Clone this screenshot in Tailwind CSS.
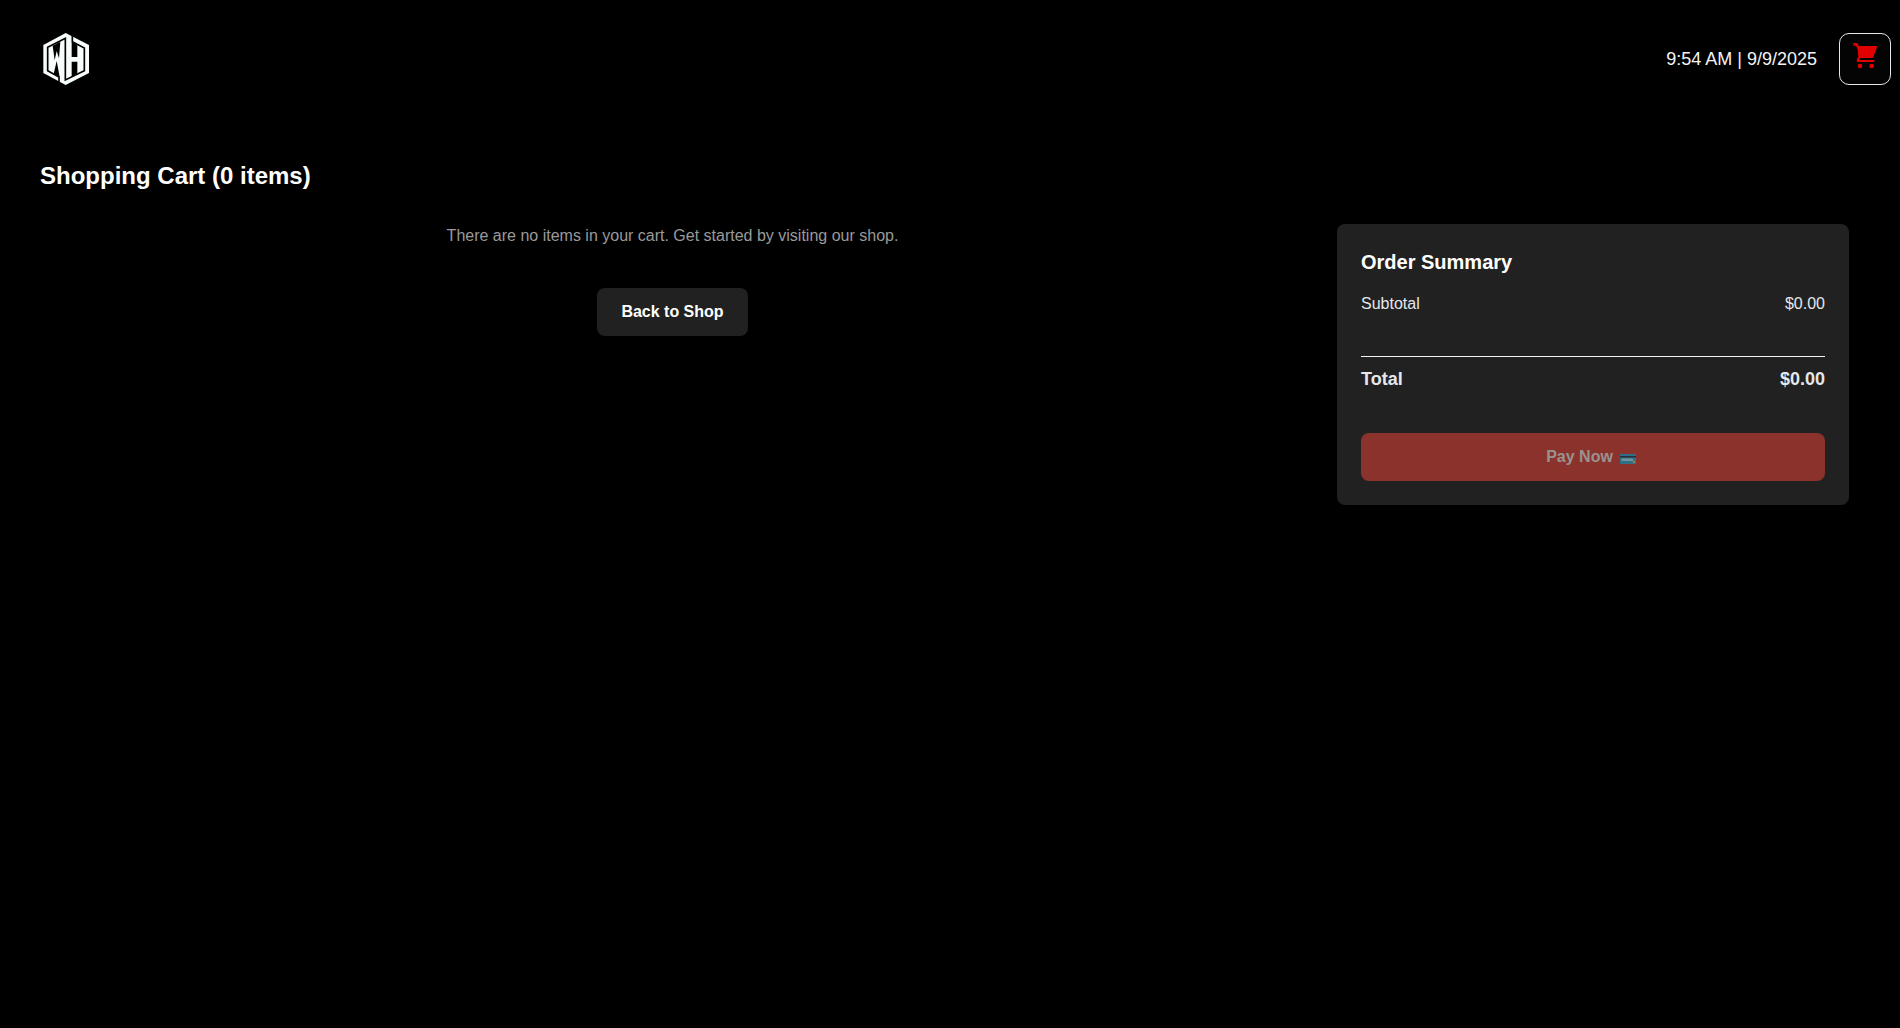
<!DOCTYPE html>
<html lang="en">
<head>
    <meta charset="UTF-8">
    <meta name="viewport" content="width=device-width, initial-scale=1.0">
    <title>Shopping Cart</title>
    <script src="https://cdn.jsdelivr.net/npm/@tailwindcss/browser@4"></script>
</head>
<body class="min-h-screen bg-black text-white font-['Liberation_Sans',Arial,sans-serif]">
    <header class="flex items-center justify-between h-[118px] pl-10 pr-[9px]">
        <a href="#" aria-label="Home">
            <svg class="w-[52px] h-[52px]" viewBox="0 0 156 156">
                <path d="M77 0L147 36V120L77 156L10 120V36Z" fill="#f7fdfb"/>
                <!-- Channels that separate the W and H from the frame -->
                <path d="M57 150V132L23 113V43L76 16V141L133 113V45L97 26V6" fill="none" stroke="#000" stroke-width="5"/>
                <!-- W -->
                <path d="M38 38L61 26L57 76L50 54L44 82Z"/>
                <path d="M50 84L59 132L41 123Z"/>
                <!-- H -->
                <path d="M95 26L112 36V72H95Z"/>
                <path d="M95 86H112V122L95 131Z"/>
            </svg>
        </a>
        <div class="flex items-center gap-[22px]">
            <span class="text-lg font-medium text-gray-100">9:54 AM | 9/9/2025</span>
            <button class="flex justify-center w-[52px] h-[52px] pt-2 rounded-[10px] border border-gray-200 bg-[#040404]" aria-label="Cart">
                <svg class="w-7 h-7" viewBox="0 0 84 84" fill="#e00000">
                    <path d="M7 3H17Q20 3 21 6L23 12H76Q80 12 78 16L67 45Q66 48 62 48H28L25 54H68Q71 54 71 57T68 60H21Q15 60 17 54L22 44L20 22L15 11H7Z"/>
                    <circle cx="27" cy="72" r="7"/>
                    <circle cx="62" cy="72" r="7"/>
                </svg>
            </button>
        </div>
    </header>

    <main class="pt-[42px] pl-10 pr-[51px]">
        <h1 class="text-2xl font-bold">Shopping Cart (0 items)</h1>

        <div class="flex items-start gap-8 mt-8">
            <!-- Cart items -->
            <section class="flex flex-col flex-1 items-center gap-10">
                <p class="text-[#9a9a9a]">There are no items in your cart. Get started by visiting our shop.</p>
                <a href="#" class="px-6 py-3 rounded-lg bg-[#212121] font-bold">Back to Shop</a>
            </section>

            <!-- Order summary -->
            <section class="w-lg p-6 rounded-lg bg-[#212121] text-gray-200">
                <h2 class="text-xl font-bold text-white">Order Summary</h2>
                <div class="flex justify-between mt-4">
                    <span>Subtotal</span>
                    <span>$0.00</span>
                </div>
                <div class="flex justify-between mt-10 pt-2 border-t border-gray-100 text-lg font-bold">
                    <span>Total</span>
                    <span>$0.00</span>
                </div>
                <button class="flex items-center justify-center gap-[7px] w-full h-12 mt-10 pr-1 rounded-lg bg-[#8b322c] font-bold text-[#999391]" disabled>
                    Pay Now
                    <svg class="w-4 h-[10px] mt-1" viewBox="0 0 16 10">
                        <rect width="16" height="10" rx="0.500" fill="#2f6f88"/>
                        <rect y="2" width="16" height="1.500" fill="#2b2d33"/>
                        <rect x="1.500" y="4.500" width="11.500" height="2.500" rx="0.500" fill="#7093a0"/>
                        <circle cx="14" cy="8" r="1.200" fill="#a08040"/>
                    </svg>
                </button>
            </section>
        </div>
    </main>
</body>
</html>
